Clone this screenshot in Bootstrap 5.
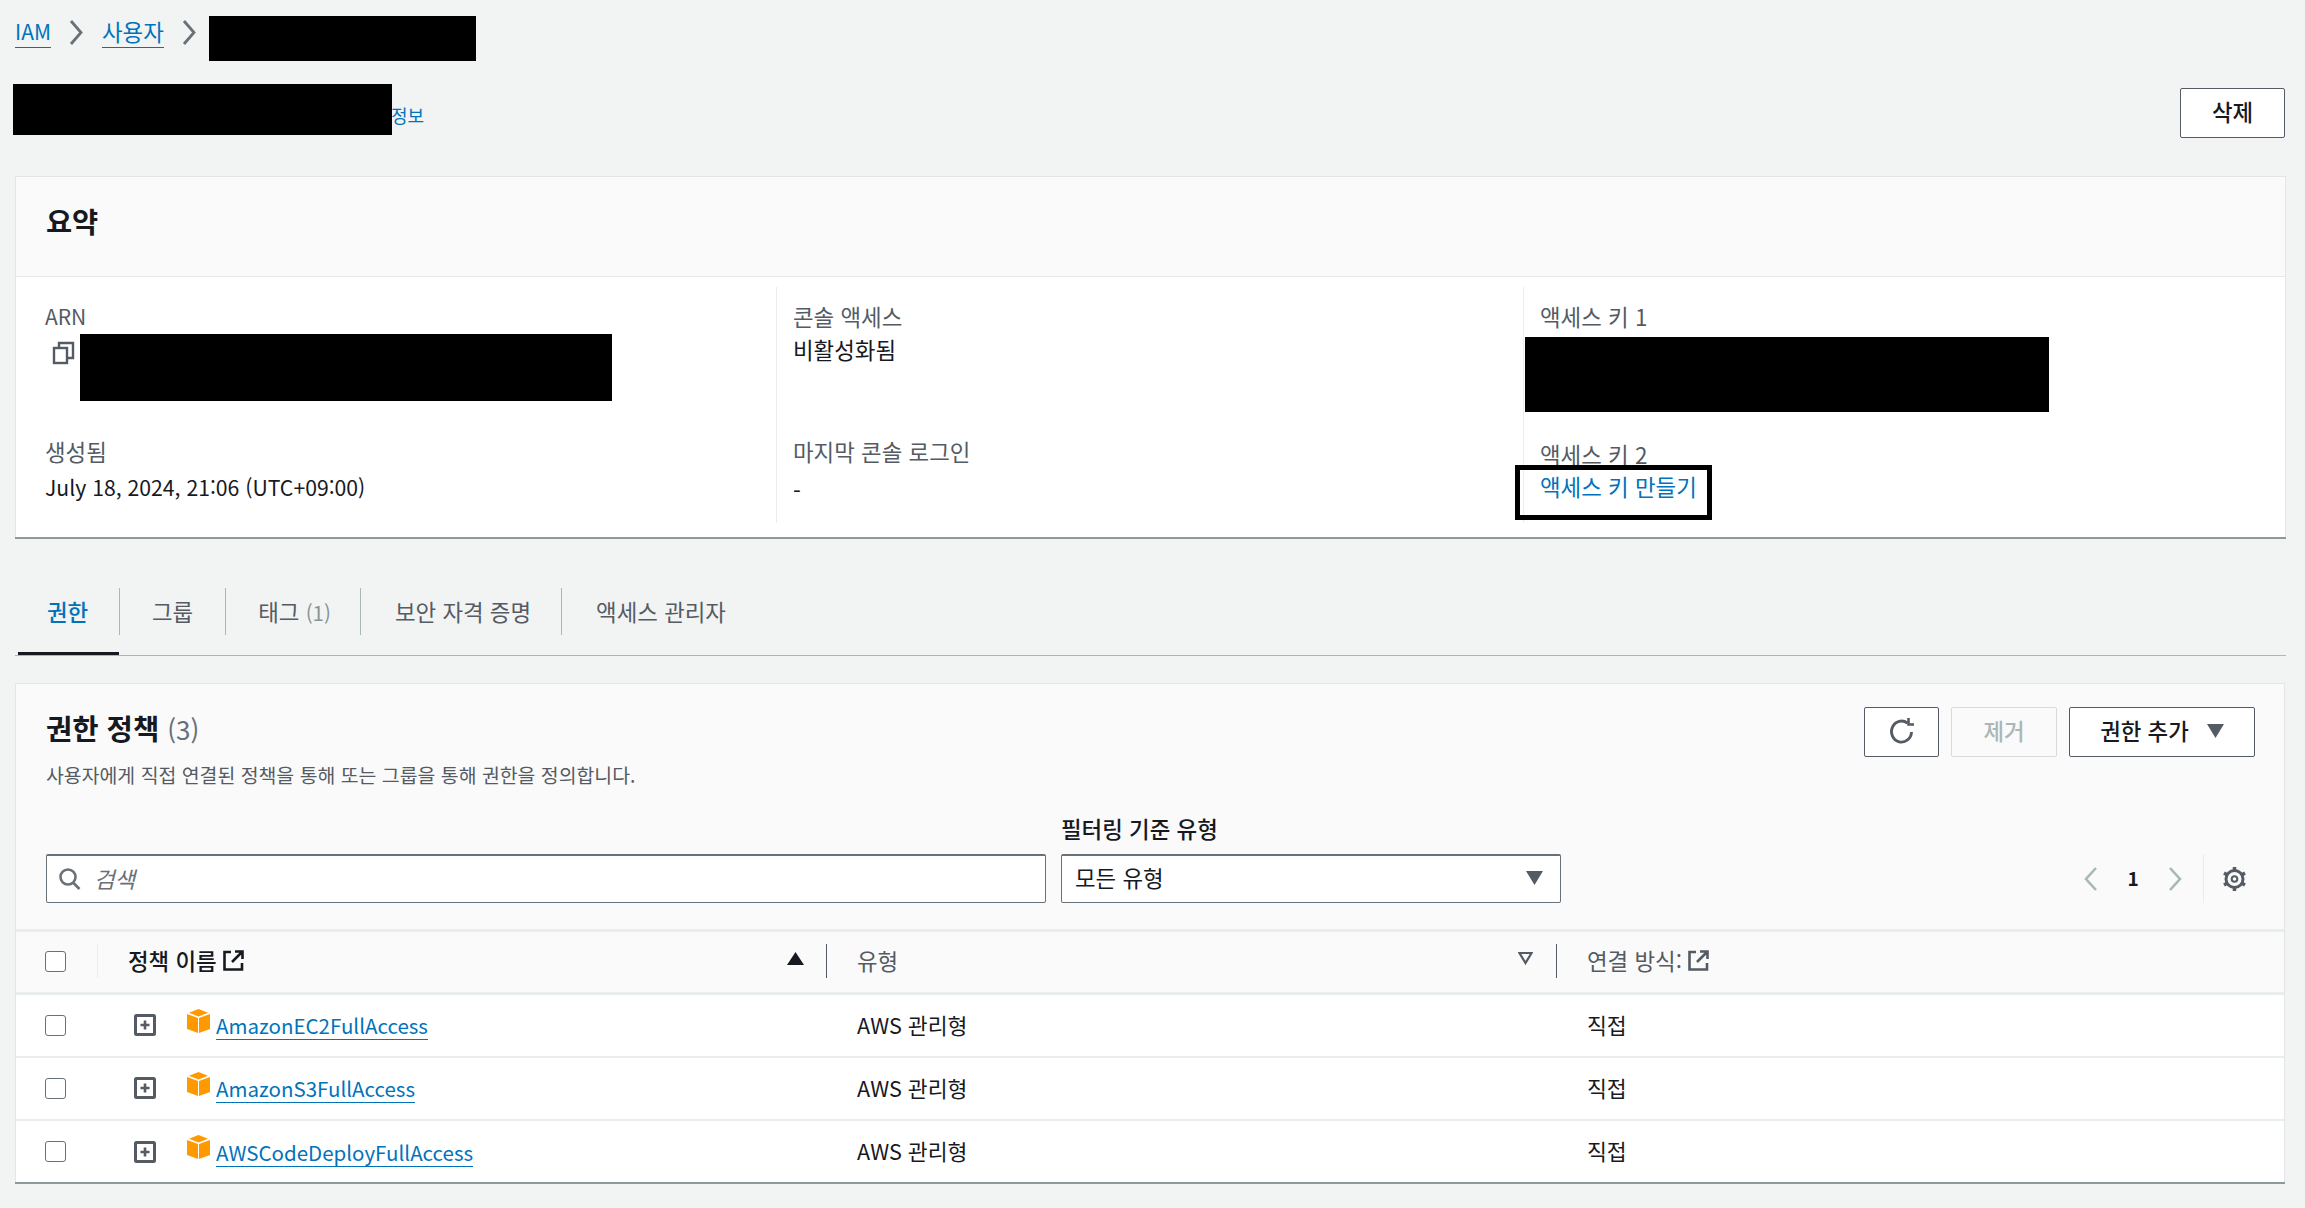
<!DOCTYPE html>
<html lang="ko">
<head>
<meta charset="utf-8">
<title>IAM 사용자</title>
<link href="https://cdn.jsdelivr.net/npm/bootstrap@5.3.0/dist/css/bootstrap.min.css" rel="stylesheet">
<style>
html,body{background:#f2f3f3;}
body{font-family:"Noto Sans CJK KR","Noto Sans",sans-serif;font-size:22.4px;color:#16191f;}
a{color:#0073bb;}
.lat{font-size:21px;}
.pg{padding:16px 19px 25px 15px;}
.crumbs{height:45px;gap:18px;}
.crumbs a{line-height:31px;border-bottom:1px solid #0073bb;text-decoration:none;}
.crumbs svg{margin-top:4px;}
.crumbs-block{width:267px;height:45px;background:#000;margin-left:-6px;}
.titlebar{height:115px;margin-left:-2px;padding-right:1px;}
.title-block{width:379px;height:51px;background:#000;margin-top:23px;}
.info-link{font-size:18px;text-decoration:none;line-height:20px;margin:44px 0 0 -1px;align-self:flex-start;}
.btn-aws{border:1.5px solid #545b64;border-radius:2px;background:#fff;color:#16191f;font-size:22.4px;font-weight:500;line-height:1;padding:0 0 3px;height:50px;display:inline-flex;align-items:center;justify-content:center;}
.btn-del{width:105px;margin-top:27px;}
.panel{background:#fff;border:1px solid #e3e6e6;border-bottom:0;box-shadow:0 2px 0 #8d9a9b;border-radius:0;}
.panel-sum{height:361px;}
.panel-head{background:#fafafa;height:100px;border-bottom:1px solid #e4e7e7;padding:0 0 11px 30px;display:flex;align-items:center;}
.panel-head h2{font-size:28.4px;font-weight:700;margin:0;}
.sum-grid{display:grid;grid-template-columns:760px 747px 1fr;margin-top:10px;}
.sum-col{height:236px;padding:15px 0 0 16px;border-left:1px solid #eaeded;}
.sum-col:first-child{border-left:0;padding-left:29px;}
.sum-label{color:#545b64;line-height:28px;}
.sum-val{line-height:38px;height:107px;}
.sum-val-last{line-height:32px;height:auto;padding-top:9px;}
.date-val{font-size:21.2px;padding-top:6px;}
.arn-row{gap:5px;margin-top:4px;height:103px;}
.arn-row svg{margin:7px 0 0 7px;}
.arn-block{width:532px;height:67px;background:#000;}
.key-block{width:524px;height:75px;background:#000;margin:7px 0 0 -15px;}
.sum-key{position:relative;}
.sum-val-key{height:103px;}
.create-link{text-decoration:none;line-height:28px;display:block;margin-top:4px;}
.callout{position:absolute;left:-9px;top:178px;width:197px;height:55px;border:5px solid #000;}
.tabbar{margin-top:51px;height:68px;border-bottom:1px solid #aab7b8;}
.tabbar .nav-item{height:47px;position:relative;border-right:1.5px solid #aab7b8;}
.tabbar .nav-item:last-child{border-right:0;}
.tabbar .nav-link{padding:0 32px;height:47px;line-height:46px;color:#545b64;font-size:22.4px;white-space:nowrap;}
.tabbar .nav-item:nth-child(3) .nav-link{padding-right:29px;}
.tabbar .nav-item:nth-child(4) .nav-link,.tabbar .nav-item:nth-child(5) .nav-link{padding-left:34px;padding-right:30px;}
.tabbar .nav-link.active{color:#0073bb;font-weight:500;}
.tabbar .nav-item:first-child{width:105px;}
.tabbar .nav-item:first-child::after{content:"";position:absolute;left:3px;right:0;top:64px;height:3px;background:#16191f;}
.muted{color:#879596;font-size:20.5px;}
.panel-perm{margin-top:27px;height:499px;margin-right:1px;overflow:hidden;}
.perm-top{background:#fafafa;height:245px;padding:23px 29px 0 30px;position:relative;}
.perm-title{font-size:28.6px;font-weight:700;line-height:40px;margin:1px 0 0;}
.perm-title span{font-weight:400;color:#687078;font-size:26px;}
.perm-desc{font-size:19.4px;color:#545b64;line-height:24px;margin-top:14px;}
.btn-ref{width:75px;}
.btn-dis{width:106px;background:#fafafa;border-color:#d5dbdb;color:#aab7b8;}
.btn-add{width:186px;gap:18px;}
.top-btns{gap:12px;}
.filters{margin-top:67px;}
.search-box{width:1000px;height:49px;background:#fff;border:1.5px solid #687078;border-top-width:2px;border-radius:2px;padding-left:11px;gap:13px;}
.search-box .form-control{border:0;padding:0;background:transparent;font-style:italic;font-size:22.4px;box-shadow:none;}
.search-box .form-control::placeholder{color:#687078;}
.filter-wrap{width:500px;margin-left:15px;margin-top:-40px;}
.filter-label{line-height:28px;margin-bottom:12px;font-weight:500;}
.filter-sel{height:49px;background:#fff;border:1.5px solid #687078;border-top-width:2px;border-radius:2px;padding:0 17px 2px 13px;}
.pager{margin-left:auto;margin-right:8px;height:49px;}
.pager-num{font-weight:700;width:68px;text-align:center;font-size:19px;}
.pager-sep{width:1px;height:49px;background:#eaeded;margin-left:20px;margin-right:18px;}
.pol-table{table-layout:fixed;width:100%;margin:0;--bs-table-bg:transparent;--bs-table-color:#16191f;}
.pol-table th,.pol-table td{padding:0;vertical-align:middle;position:relative;font-size:21.6px;}
.pol-table thead tr{height:63px;background:#fafafa;}
.pol-table thead th{border-top:3px solid #eaeded;border-bottom:3px solid #eaeded;font-weight:400;color:#545b64;font-size:22.4px;padding-bottom:2px;}
.pol-table tbody tr{height:63px;}
.pol-table tbody td{border-bottom:2px solid #eaeded;}
.pol-table tbody tr:last-child td{border-bottom:0;}
.pol-table .form-check-input{width:21px;height:21px;margin:0 0 0 29px;border:1.5px solid #687078;border-radius:3px;display:block;}
.th-cell{padding-left:31px;gap:6px;}
.th-sep::before{content:"";position:absolute;left:0;top:12px;height:34px;width:1px;background:#545b64;}
.th-sep-light::before{background:#eaeded;}
.sort-ico{position:absolute;right:22px;top:20px;}
.sort-ico-d{right:23px;}
.th-strong{color:#16191f;font-weight:500;}
.name-cell{padding-left:37px;}
.cube{margin:-9px 6px 0 31px;}
.pol-link{font-size:20.5px;line-height:28px;border-bottom:1.5px solid #0073bb;text-decoration:none;margin-top:1px;}
.td-pad{padding-left:31px!important;}
</style>
</head>
<body>
<div class="pg">
  <nav class="crumbs d-flex align-items-start">
    <a href="#" class="lat">IAM</a>
    <svg width="15" height="25" viewBox="0 0 15 25"><path d="M2 1l10 11.500L2 24" fill="none" stroke="#687078" stroke-width="2.800"/></svg>
    <a href="#">사용자</a>
    <svg width="15" height="25" viewBox="0 0 15 25"><path d="M2 1l10 11.500L2 24" fill="none" stroke="#687078" stroke-width="2.800"/></svg>
    <div class="crumbs-block"></div>
  </nav>
  <div class="titlebar d-flex">
    <div class="title-block"></div>
    <a class="info-link" href="#">정보</a>
    <button class="btn btn-aws btn-del ms-auto align-self-start" type="button">삭제</button>
  </div>

  <section class="panel panel-sum">
    <div class="panel-head"><h2>요약</h2></div>
    <div class="sum-grid">
      <div class="sum-col">
        <div class="sum-label lat">ARN</div>
        <div class="sum-val d-flex arn-row">
          <svg width="23" height="24" viewBox="0 0 23 24" fill="none" stroke="#545b64" stroke-width="2.4"><rect x="2" y="7" width="13" height="15"/><path d="M7 6V2h14v15h-5"/></svg>
          <div class="arn-block"></div>
        </div>
        <div class="sum-label">생성됨</div>
        <div class="sum-val sum-val-last date-val">July 18, 2024, 21:06 (UTC+09:00)</div>
      </div>
      <div class="sum-col">
        <div class="sum-label">콘솔 액세스</div>
        <div class="sum-val">비활성화됨</div>
        <div class="sum-label">마지막 콘솔 로그인</div>
        <div class="sum-val sum-val-last">-</div>
      </div>
      <div class="sum-col sum-key">
        <div class="sum-label">액세스 키 1</div>
        <div class="sum-val sum-val-key"><div class="key-block"></div></div>
        <div class="sum-label">액세스 키 2</div>
        <a class="create-link" href="#">액세스 키 만들기</a>
        <div class="callout"></div>
      </div>
    </div>
  </section>

  <ul class="nav tabbar">
    <li class="nav-item"><a class="nav-link active" href="#">권한</a></li>
    <li class="nav-item"><a class="nav-link" href="#">그룹</a></li>
    <li class="nav-item"><a class="nav-link" href="#">태그 <span class="muted">(1)</span></a></li>
    <li class="nav-item"><a class="nav-link" href="#">보안 자격 증명</a></li>
    <li class="nav-item"><a class="nav-link" href="#">액세스 관리자</a></li>
  </ul>

  <section class="panel panel-perm">
    <div class="perm-top">
      <div class="d-flex justify-content-between">
        <div>
          <h2 class="perm-title">권한 정책 <span>(3)</span></h2>
          <div class="perm-desc">사용자에게 직접 연결된 정책을 통해 또는 그룹을 통해 권한을 정의합니다.</div>
        </div>
        <div class="d-flex top-btns align-items-start">
          <button class="btn btn-aws btn-ref" type="button" aria-label="새로 고침">
            <svg width="26" height="26" viewBox="0 0 26 26" fill="none" stroke="#545b64" stroke-width="2.900"><path d="M22.500 14a10 10.500 0 1 1-4-8.800"/><path d="M19.500 0v6.500h5.500" stroke-width="2.600"/></svg>
          </button>
          <button class="btn btn-aws btn-dis" type="button">제거</button>
          <button class="btn btn-aws btn-add" type="button">권한 추가
            <svg width="17" height="14" viewBox="0 0 17 14"><path d="M0 0h17l-8.500 14z" fill="#545b64"/></svg>
          </button>
        </div>
      </div>
      <div class="d-flex filters align-items-start">
        <div class="search-box d-flex align-items-center">
          <svg width="23" height="24" viewBox="0 0 23 24" fill="none" stroke="#687078" stroke-width="2.600" class="flex-shrink-0"><circle cx="10" cy="10" r="7.500"/><path d="M15.500 16l6 6"/></svg>
          <input class="form-control" type="text" placeholder="검색" aria-label="검색">
        </div>
        <div class="filter-wrap">
          <div class="filter-label">필터링 기준 유형</div>
          <div class="filter-sel d-flex align-items-center justify-content-between">
            <span>모든 유형</span>
            <svg width="17" height="14" viewBox="0 0 17 14"><path d="M0 0h17l-8.500 14z" fill="#545b64"/></svg>
          </div>
        </div>
        <div class="pager d-flex align-items-center">
          <svg width="16" height="26" viewBox="0 0 16 26"><path d="M13 2L3 13l10 11" fill="none" stroke="#aab7b8" stroke-width="2.600"/></svg>
          <div class="pager-num">1</div>
          <svg width="16" height="26" viewBox="0 0 16 26"><path d="M3 2l10 11L3 24" fill="none" stroke="#aab7b8" stroke-width="2.600"/></svg>
          <div class="pager-sep"></div>
          <svg width="25" height="26" viewBox="0 0 25 26" fill="none" stroke="#545b64"><circle cx="12.500" cy="13" r="8.500" stroke-width="3"/><circle cx="12.500" cy="13" r="2.800" stroke-width="2"/><path d="M12.500 1v3M12.500 22v3M2 7l2.600 1.500M20.400 17.500L23 19M2 19l2.600-1.500M20.400 8.500L23 7" stroke-width="3.500"/></svg>
        </div>
      </div>
    </div>
    <table class="table pol-table">
      <colgroup><col style="width:81px"><col style="width:729px"><col style="width:730px"><col></colgroup>
      <thead>
        <tr>
          <th scope="col"><input class="form-check-input" type="checkbox" aria-label="전체 선택"></th>
          <th scope="col" class="th-sep th-sep-light">
            <div class="th-cell d-flex align-items-center th-strong">정책 이름
              <svg width="21" height="21" viewBox="0 0 21 21" fill="none" stroke="#16191f" stroke-width="2.600"><path d="M8 2H1.500v17.500H19V13"/><path d="M12 1.500h7.500V9M19 2L9 12"/></svg>
            </div>
            <svg class="sort-ico" width="17" height="13" viewBox="0 0 17 13"><path d="M8.500 0L17 13H0z" fill="#16191f"/></svg>
          </th>
          <th scope="col" class="th-sep">
            <div class="th-cell">유형</div>
            <svg class="sort-ico sort-ico-d" width="15" height="13" viewBox="0 0 15 13"><path d="M1.500 1h12l-6 10z" fill="none" stroke="#545b64" stroke-width="2.200"/></svg>
          </th>
          <th scope="col" class="th-sep">
            <div class="th-cell d-flex align-items-center">연결 방식:
              <svg width="21" height="21" viewBox="0 0 21 21" fill="none" stroke="#545b64" stroke-width="2.600"><path d="M8 2H1.500v17.500H19V13"/><path d="M12 1.500h7.500V9M19 2L9 12"/></svg>
            </div>
          </th>
        </tr>
      </thead>
      <tbody>
        <tr>
          <td><input class="form-check-input" type="checkbox" aria-label="선택"></td>
          <td>
            <div class="name-cell d-flex align-items-center">
              <svg width="22" height="22" viewBox="0 0 22 22" fill="none" stroke="#545b64" stroke-width="3"><rect x="1.500" y="1.500" width="19" height="19" rx="1"/><path d="M11 6.500v9M6.500 11h9" stroke-width="2.600"/></svg>
              <svg class="cube" width="23" height="24" viewBox="0 0 23 24"><path d="M0 5l11 4v15L0 20zM23 5l-11 4v15l11-4zM11.500 0L21 3.800 11.500 7.500 2 3.800z" fill="#ff9900"/></svg>
              <a class="pol-link" href="#">AmazonEC2FullAccess</a>
            </div>
          </td>
          <td class="td-pad">AWS 관리형</td>
          <td class="td-pad">직접</td>
        </tr>
        <tr>
          <td><input class="form-check-input" type="checkbox" aria-label="선택"></td>
          <td>
            <div class="name-cell d-flex align-items-center">
              <svg width="22" height="22" viewBox="0 0 22 22" fill="none" stroke="#545b64" stroke-width="3"><rect x="1.500" y="1.500" width="19" height="19" rx="1"/><path d="M11 6.500v9M6.500 11h9" stroke-width="2.600"/></svg>
              <svg class="cube" width="23" height="24" viewBox="0 0 23 24"><path d="M0 5l11 4v15L0 20zM23 5l-11 4v15l11-4zM11.500 0L21 3.800 11.500 7.500 2 3.800z" fill="#ff9900"/></svg>
              <a class="pol-link" href="#">AmazonS3FullAccess</a>
            </div>
          </td>
          <td class="td-pad">AWS 관리형</td>
          <td class="td-pad">직접</td>
        </tr>
        <tr>
          <td><input class="form-check-input" type="checkbox" aria-label="선택"></td>
          <td>
            <div class="name-cell d-flex align-items-center">
              <svg width="22" height="22" viewBox="0 0 22 22" fill="none" stroke="#545b64" stroke-width="3"><rect x="1.500" y="1.500" width="19" height="19" rx="1"/><path d="M11 6.500v9M6.500 11h9" stroke-width="2.600"/></svg>
              <svg class="cube" width="23" height="24" viewBox="0 0 23 24"><path d="M0 5l11 4v15L0 20zM23 5l-11 4v15l11-4zM11.500 0L21 3.800 11.500 7.500 2 3.800z" fill="#ff9900"/></svg>
              <a class="pol-link" href="#">AWSCodeDeployFullAccess</a>
            </div>
          </td>
          <td class="td-pad">AWS 관리형</td>
          <td class="td-pad">직접</td>
        </tr>
      </tbody>
    </table>
  </section>
</div>
<script src="https://cdn.jsdelivr.net/npm/bootstrap@5.3.0/dist/js/bootstrap.bundle.min.js"></script>
</body>
</html>
